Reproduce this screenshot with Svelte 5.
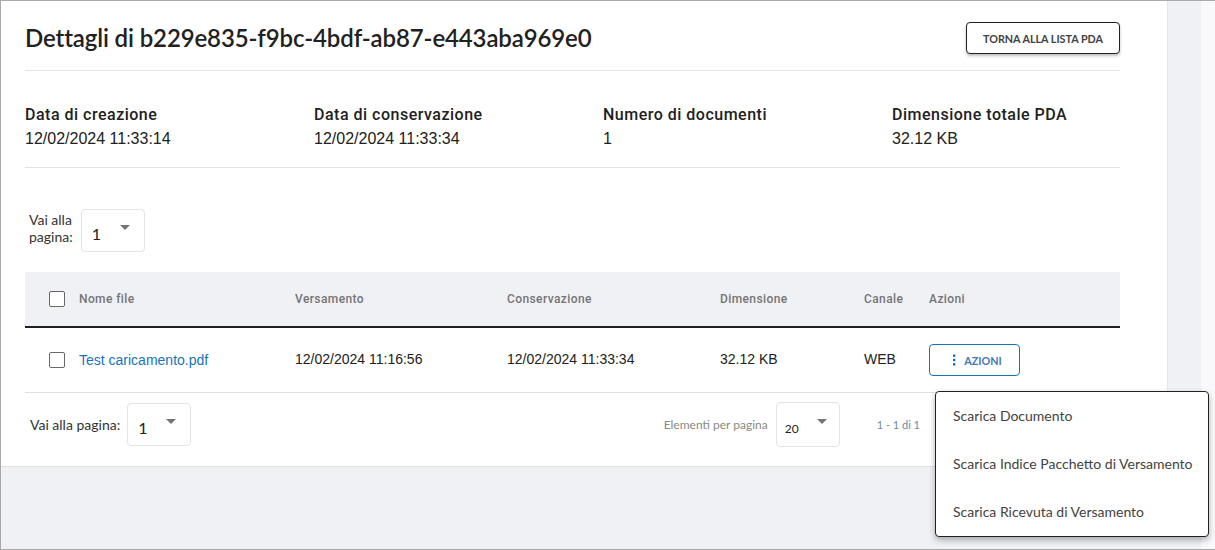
<script>
  const summary = [
    { label: 'Data di creazione', value: '12/02/2024 11:33:14' },
    { label: 'Data di conservazione', value: '12/02/2024 11:33:34' },
    { label: 'Numero di documenti', value: '1' },
    { label: 'Dimensione totale PDA', value: '32.12 KB' }
  ];
  const columns = ['Nome file', 'Versamento', 'Conservazione', 'Dimensione', 'Canale', 'Azioni'];
  const menuItems = ['Scarica Documento', 'Scarica Indice Pacchetto di Versamento', 'Scarica Ricevuta di Versamento'];
</script>

<div class="page">
  <main class="card">
    <header class="head">
      <h1>Dettagli di b229e835-f9bc-4bdf-ab87-e443aba969e0</h1>
      <button class="back">TORNA ALLA LISTA PDA</button>
    </header>

    <section class="summary">
      {#each summary as item}
        <div>
          <div class="summary-label">{item.label}</div>
          <div class="summary-value">{item.value}</div>
        </div>
      {/each}
    </section>

    <div class="jump jump--top">
      <span class="jump-label">Vai alla<br />pagina:</span>
      <div class="select select--top">
        <span class="select-value">1</span>
        <span class="caret"></span>
      </div>
    </div>

    <div class="table">
      <div class="row row--head">
        <span class="check"></span>
        {#each columns as col}
          <span>{col}</span>
        {/each}
      </div>
      <div class="row row--body">
        <span class="check"></span>
        <a href="#top" class="file">Test caricamento.pdf</a>
        <span class="cell">12/02/2024 11:16:56</span>
        <span class="cell">12/02/2024 11:33:34</span>
        <span class="cell">32.12 KB</span>
        <span class="cell">WEB</span>
        <span>
          <button class="actions">
            <svg width="4" height="12" viewBox="0 0 4 12" fill="#1a73b8">
              <rect x="1" y="0.5" width="2.4" height="2.4" />
              <rect x="1" y="4.8" width="2.4" height="2.4" />
              <rect x="1" y="9.1" width="2.4" height="2.4" />
            </svg>
            AZIONI
          </button>
        </span>
      </div>
    </div>

    <footer class="pager">
      <div class="jump">
        <span class="jump-label">Vai alla pagina:</span>
        <div class="select select--top">
          <span class="select-value">1</span>
          <span class="caret"></span>
        </div>
      </div>
      <div class="per-page">
        <span class="per-page-label">Elementi per pagina</span>
        <div class="select select--small">
          <span class="select-value">20</span>
          <span class="caret"></span>
        </div>
        <span class="range">1 - 1 di 1</span>
      </div>
    </footer>
  </main>
  <div class="band"></div>

  <ul class="menu">
    {#each menuItems as item}
      <li>{item}</li>
    {/each}
  </ul>
</div>

<style>
  :global(body) {
    margin: 0;
  }

  .page {
    position: relative;
    display: flex;
    align-items: flex-start;
    box-sizing: border-box;
    height: 550px;
    overflow: hidden;
    border: 1px solid #a9a9a9;
    border-right: 0;
    background: #f0f1f5;
    font-family: "Liberation Sans", sans-serif;
    color: #212121;
  }

  /* ── Card ── */
  .card {
    box-sizing: border-box;
    width: 1167px;
    height: 466px;
    padding: 0 47px 0 24px;
    background: #fff;
    border-bottom: 1px solid #e0e0e0;
    border-right: 1px solid #e4e4e8;
  }

  .band {
    width: 33px;
    height: 100%;
    flex: none;
  }

  .page::after {
    content: "";
    flex: 1;
    height: 100%;
    background: #f9f9fb;
  }

  .head {
    display: flex;
    justify-content: space-between;
    align-items: flex-start;
    height: 69px;
    border-bottom: 1px solid #e3e3e3;
  }

  h1 {
    margin: 0;
    padding-top: 21px;
    font: 600 24px/32px Lato, sans-serif;
    letter-spacing: -0.12px;
    color: #212121;
  }

  .back {
    margin-top: 21px;
    width: 154px;
    height: 32px;
    padding: 0;
    border: 1px solid #212121;
    border-radius: 4px;
    background: #fff;
    box-shadow: 0 2px 3px rgba(0, 0, 0, 0.25);
    font: 700 10.75px Lato, sans-serif;
    color: #424242;
  }

  .summary {
    display: grid;
    grid-template-columns: repeat(4, 289px);
    height: 97px;
    box-sizing: border-box;
    padding-top: 32px;
    border-bottom: 1px solid #e3e3e3;
  }

  .summary-label {
    font: 500 16px/24px Roboto, sans-serif;
    letter-spacing: 0.5px;
    color: #212121;
  }

  .summary-value {
    font: 16px/24px "Liberation Sans", sans-serif;
    color: #212121;
  }

  /* ── Page jump ── */
  .jump {
    display: flex;
    align-items: center;
    gap: 7px;
    padding-left: 5px;
  }

  .jump--top {
    gap: 8px;
    padding-top: 41px;
    padding-left: 4px;
  }

  .jump-label {
    font: 14px/20px Lato, sans-serif;
    color: #333;
  }

  .jump--top .jump-label {
    line-height: 17px;
    margin-top: -6px;
  }

  .select {
    position: relative;
    box-sizing: border-box;
    border: 1px solid #e3e3e3;
    border-radius: 4px;
    background: #fff;
  }

  .select--top {
    width: 64px;
    height: 43px;
  }

  .select--small {
    width: 64px;
    height: 45px;
  }

  .select-value {
    display: block;
    padding: 15px 0 0 10px;
    font: 16px/18px Lato, sans-serif;
    color: #212121;
  }

  .select--small .select-value {
    font-size: 12px;
    padding: 17px 0 0 8px;
  }

  .caret {
    position: absolute;
    right: 14px;
    top: 15px;
    border-left: 5.5px solid transparent;
    border-right: 5.5px solid transparent;
    border-top: 5px solid #757575;
  }

  .select--small .caret {
    right: 12px;
    top: 16px;
  }

  /* ── Table ── */
  .table {
    margin-top: 20px;
  }

  .row {
    display: grid;
    grid-template-columns: 30px 216px 212px 213px 144px 65px 1fr;
    align-items: center;
    padding-left: 24px;
  }

  .row--head {
    box-sizing: content-box;
    height: 54px;
    background: #f0f1f5;
    border-bottom: 2px solid #212121;
    font: 500 12px Roboto, sans-serif;
    letter-spacing: 0.4px;
    color: #757575;
  }

  .row--body {
    height: 64px;
    border-bottom: 1px solid #e0e0e0;
    font-size: 14px;
    color: #212121;
  }

  .cell {
    margin-bottom: 2px;
  }

  .check {
    box-sizing: border-box;
    width: 16px;
    height: 16px;
    border: 1px solid #666;
    border-radius: 2px;
    background: #fff;
  }

  .file {
    color: #1a73b8;
    text-decoration: none;
  }

  .actions {
    display: flex;
    align-items: center;
    justify-content: center;
    gap: 8px;
    box-sizing: border-box;
    width: 91px;
    height: 32px;
    padding: 0 0 0 5px;
    border: 1px solid #1a73b8;
    border-radius: 4px;
    background: #fff;
    font: 700 10.75px Lato, sans-serif;
    color: #3f78b5;
  }

  /* ── Pager ── */
  .pager {
    display: flex;
    justify-content: space-between;
    align-items: flex-start;
    padding-top: 10px;
  }

  .per-page {
    display: flex;
    align-items: center;
    margin-top: -1px;
    margin-right: 200px;
    gap: 8px;
  }

  .per-page-label {
    font: 12px Lato, sans-serif;
    color: #8a8a80;
  }

  .range {
    margin-left: 29px;
    font: 11px Lato, sans-serif;
    color: #6a8aa0;
  }

  /* ── Dropdown ── */
  .menu {
    position: absolute;
    left: 934px;
    top: 390px;
    box-sizing: border-box;
    width: 274px;
    height: 146px;
    margin: 0;
    padding: 0;
    list-style: none;
    background: #fff;
    border: 1px solid #212121;
    border-radius: 4px;
    box-shadow: 0 3px 6px rgba(0, 0, 0, 0.3);
    font: 14px/48px Lato, sans-serif;
    color: #424242;
  }

  .menu li {
    padding-left: 17px;
    white-space: nowrap;
  }
</style>
